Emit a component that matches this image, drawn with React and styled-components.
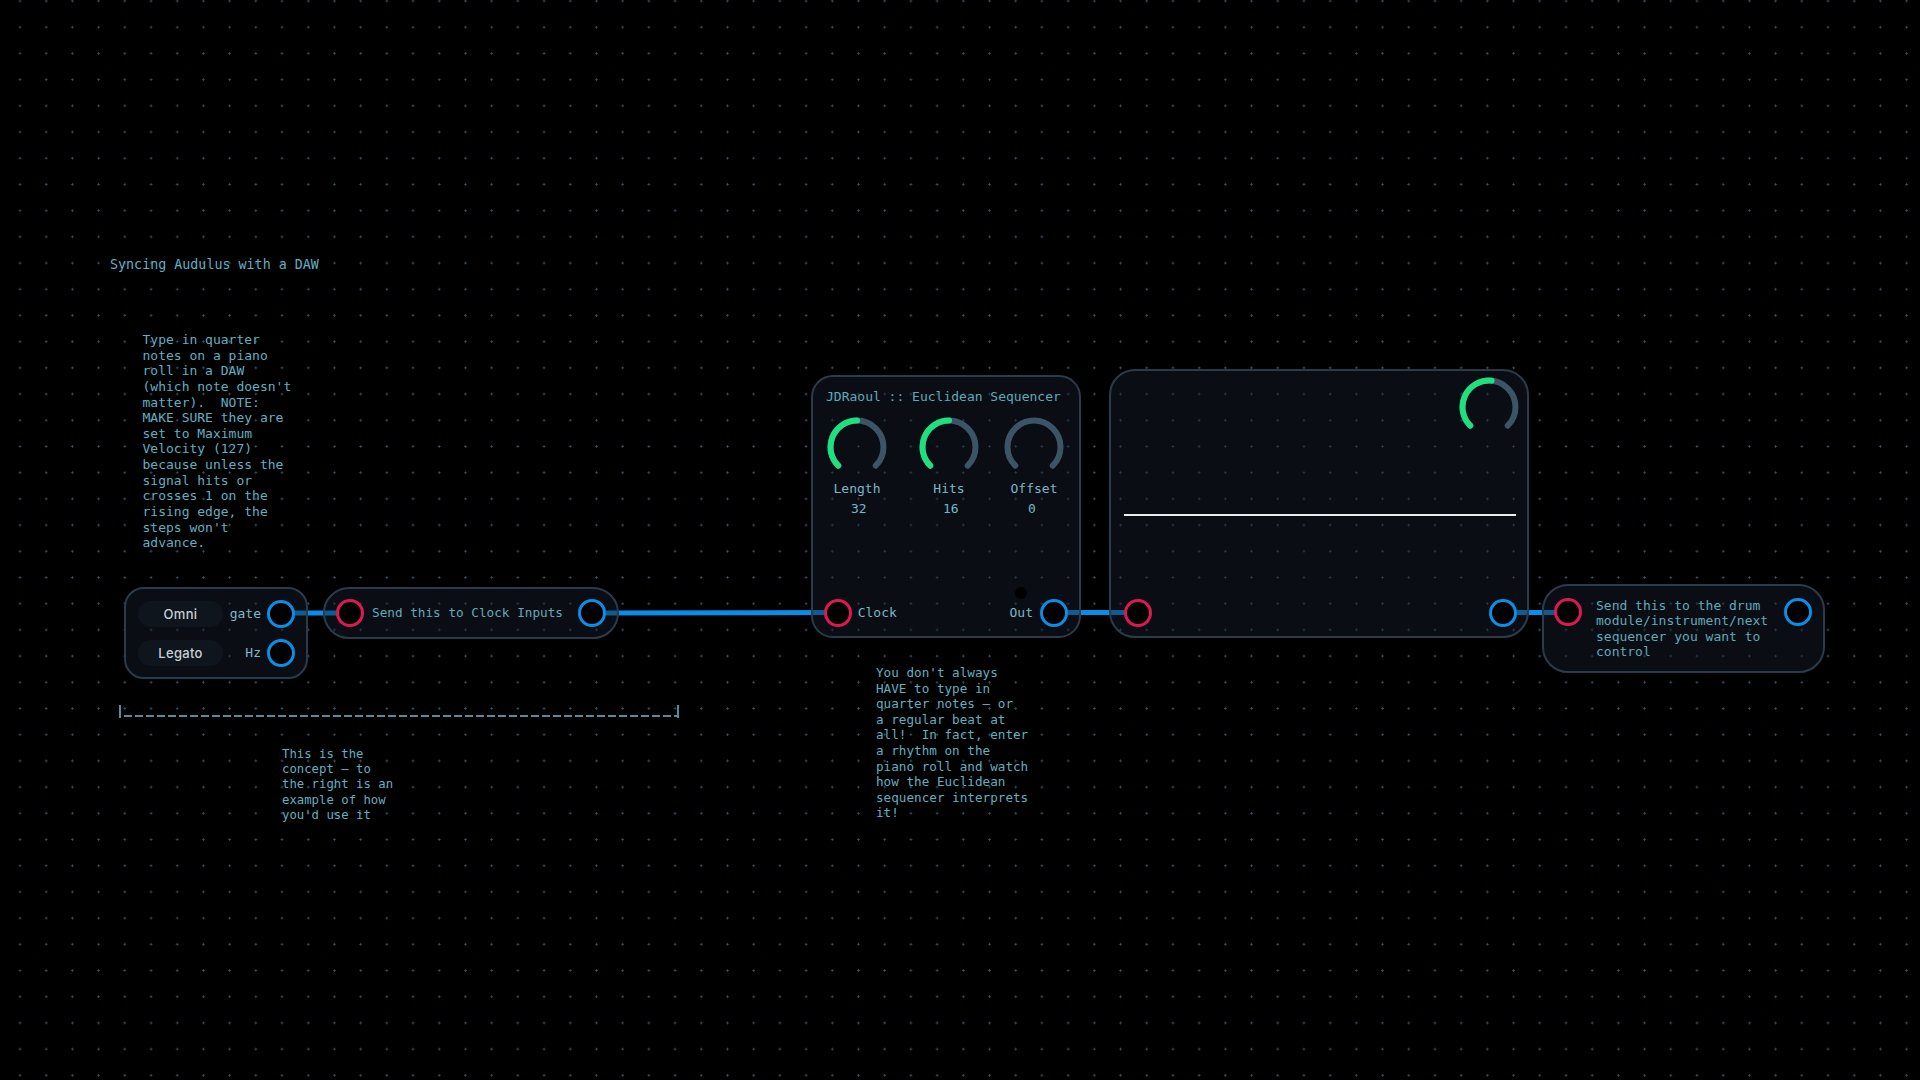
import React from "react";
import styled, { createGlobalStyle } from "styled-components";

const MONO = `"DejaVu Sans Mono", "Liberation Mono", monospace`;
const SANS = `Inter, "Noto Sans", "Liberation Sans", sans-serif`;

const GlobalStyle = createGlobalStyle`
  html, body { margin: 0; padding: 0; background: #000; }
  body { font-family: ${MONO}; overflow: hidden; }
  #root { width: 1920px; height: 1080px; }
`;

const Canvas = styled.div`
  position: relative;
  width: 1920px;
  height: 1080px;
  overflow: hidden;
  background-color: #000;
  background-image: radial-gradient(circle at center, rgba(58, 96, 122, 0.85) 0, rgba(58, 96, 122, 0.85) 0.9px, transparent 1.3px);
  background-size: 26.21px 26.21px;
  background-position: 6.9px -12.1px;
  font-family: ${MONO};
`;

const WireLayer = styled.svg`
  position: absolute;
  left: 0;
  top: 0;
  width: 1920px;
  height: 1080px;
  pointer-events: none;
`;

const Note = styled.div`
  position: absolute;
  left: ${(p) => p.$x}px;
  top: ${(p) => p.$y}px;
  white-space: pre;
  font-family: ${MONO};
  font-size: ${(p) => p.$fs || 13}px;
  line-height: ${(p) => p.$lh || 15.6}px;
  color: #62afc0;
`;

const Bracket = styled.div`
  position: absolute;
  left: ${(p) => p.$x}px;
  top: ${(p) => p.$y}px;
  width: ${(p) => p.$w}px;
  height: 13px;
  box-sizing: border-box;
  border-left: 2px solid #4f8f9c;
  border-right: 2px solid #4f8f9c;
  background-image: repeating-linear-gradient(to right, #4f8f9c 0, #4f8f9c 7.6px, transparent 7.6px, transparent 11px);
  background-size: 100% 2px;
  background-repeat: no-repeat;
  background-position: 3px calc(100% - 1px);
`;

const Node = styled.div`
  position: absolute;
  left: ${(p) => p.$x}px;
  top: ${(p) => p.$y}px;
  width: ${(p) => p.$w}px;
  height: ${(p) => p.$h}px;
  box-sizing: border-box;
  border: 2px solid #2a3b4a;
  border-radius: ${(p) => p.$r}px;
  background: rgba(22, 31, 44, 0.45);
  display: flex;
`;

const InputsNode = styled(Node)`
  flex-direction: column;
  padding: 10.5px 11px 0 12px;
  gap: 11.5px;
`;

const InputRow = styled.div`
  display: flex;
  align-items: center;
`;

const Pill = styled.div`
  flex: none;
  width: 85px;
  height: 26px;
  border-radius: 13px;
  background: #0f151c;
  display: flex;
  align-items: center;
  justify-content: center;
  font-family: ${SANS};
  font-size: 13px;
  font-weight: 500;
  letter-spacing: 0.3px;
  color: #c8d0d6;
`;

const PortLabel = styled.span`
  flex: ${(p) => (p.$grow ? 1 : "none")};
  text-align: ${(p) => (p.$right ? "right" : "left")};
  margin: 0 ${(p) => p.$mr || 0}px 0 ${(p) => p.$ml || 0}px;
  font-family: ${MONO};
  font-size: 13px;
  line-height: 16px;
  color: #7db6c6;
`;

const Port = styled.span`
  flex: none;
  width: 28px;
  height: 28px;
  box-sizing: border-box;
  border-radius: 50%;
  border: 3px solid ${(p) => (p.$kind === "in" ? "#dc1953" : "#0d8de6")};
  background: #000;
`;

const CommentNode = styled(Node)`
  align-items: center;
  padding: 0 11.5px 0 10.5px;
`;

const CommentText = styled.span`
  flex: 1;
  margin-left: 8.5px;
  font-size: 12.7px;
  line-height: 16px;
  color: #62a9b8;
  white-space: pre;
`;

const SeqNode = styled(Node)`
  flex-direction: column;
  padding: 12px 11px 8.7px 9px;
`;

const NodeTitle = styled.div`
  padding-left: 4px;
  font-size: 13px;
  line-height: 16px;
  color: #62a9b8;
  white-space: pre;
`;

const KnobRow = styled.div`
  display: flex;
  margin-top: 12px;
`;

const KnobCol = styled.div`
  flex: none;
  width: 70px;
  margin-left: ${(p) => p.$ml || 0}px;
  display: flex;
  flex-direction: column;
  align-items: center;
`;

const KnobSvg = styled.svg`
  display: block;
  width: 60px;
  height: 60px;
  flex: none;
`;

const KnobLabel = styled.div`
  margin-top: 4px;
  font-size: 13px;
  line-height: 16px;
  color: #7db6c6;
`;

const KnobValue = styled.div`
  width: 12px;
  margin-top: 3.5px;
  font-size: 13px;
  line-height: 16px;
  color: #6cbccc;
  white-space: nowrap;
  text-align: left;
`;

const Spacer = styled.div`
  flex: 1;
`;

const PortRow = styled.div`
  display: flex;
  align-items: center;
  padding-right: ${(p) => p.$pr || 0}px;
  padding-left: ${(p) => p.$pl || 0}px;
`;

const Led = styled.span`
  position: absolute;
  left: 202px;
  top: 209.7px;
  width: 12px;
  height: 12px;
  border-radius: 50%;
  background: #000;
`;

const ScopeNode = styled(Node)`
  flex-direction: column;
  padding: 5.7px 8px 8.7px 11px;
`;

const ScopeHeader = styled.div`
  display: flex;
  justify-content: flex-end;
`;

const Trace = styled.div`
  height: 2px;
  margin: 77.3px 3px 0 2px;
  background: #e9edf0;
`;

const OutNode = styled(Node)`
  align-items: flex-start;
  padding: 11.7px 11.3px 0 10.3px;
`;

const OutText = styled.div`
  flex: 1;
  margin: 0.3px 0 0 13.7px;
  font-size: 13px;
  line-height: 15.3px;
  color: #62a9b8;
  white-space: pre;
`;

function Knob({ value }) {
  const c = 30;
  const r = 26.5;
  const pt = (a) => [c + r * Math.cos((a * Math.PI) / 180), c + r * Math.sin((a * Math.PI) / 180)];
  const [sx, sy] = pt(135);
  const [ex, ey] = pt(45);
  const sweep = 270 * value;
  const [vx, vy] = pt(135 + sweep);
  return (
    <KnobSvg viewBox="0 0 60 60">
      <path
        d={`M${sx} ${sy} A${r} ${r} 0 1 1 ${ex} ${ey}`}
        fill="none"
        stroke="#3b5466"
        strokeWidth="6"
        strokeLinecap="round"
      />
      {value > 0 && (
        <path
          d={`M${sx} ${sy} A${r} ${r} 0 ${sweep > 180 ? 1 : 0} 1 ${vx} ${vy}`}
          fill="none"
          stroke="#1fe07f"
          strokeWidth="6"
          strokeLinecap="round"
        />
      )}
    </KnobSvg>
  );
}

const wires = [
  [282, 613, 349, 613],
  [592, 613, 838, 612.5],
  [1054, 612.5, 1136, 612.5],
  [1503, 612.5, 1568, 612.5],
];

const para1 = `Type in quarter
notes on a piano
roll in a DAW
(which note doesn't
matter).  NOTE:
MAKE SURE they are
set to Maximum
Velocity (127)
because unless the
signal hits or
crosses 1 on the
rising edge, the
steps won't
advance.`;

const para2 = `This is the
concept – to
the right is an
example of how
you'd use it`;

const para3 = `You don't always
HAVE to type in
quarter notes – or
a regular beat at
all!  In fact, enter
a rhythm on the
piano roll and watch
how the Euclidean
sequencer interprets
it!`;

const outText = `Send this to the drum
module/instrument/next
sequencer you want to
control`;

export default function App() {
  return (
    <>
      <GlobalStyle />
      <Canvas>
        <WireLayer viewBox="0 0 1920 1080">
          {wires.map(([x1, y1, x2, y2], i) => (
            <line key={i} x1={x1} y1={y1} x2={x2} y2={y2} stroke="#0b8ce6" strokeWidth="5" />
          ))}
        </WireLayer>

        <Note $x={110} $y={257} $fs={13.35}>Syncing Audulus with a DAW</Note>
        <Note $x={142.5} $y={332} $lh={15.64}>{para1}</Note>
        <Note $x={282} $y={746.5} $lh={15.4} $fs={12.3}>{para2}</Note>
        <Note $x={876} $y={665} $lh={15.6} $fs={12.65}>{para3}</Note>

        <Bracket $x={119} $y={705} $w={560} />

        <InputsNode $x={124} $y={587} $w={184} $h={92} $r={20}>
          <InputRow>
            <Pill>Omni</Pill>
            <PortLabel $grow $right $mr={6}>gate</PortLabel>
            <Port $kind="out" />
          </InputRow>
          <InputRow>
            <Pill>Legato</Pill>
            <PortLabel $grow $right $mr={6}>Hz</PortLabel>
            <Port $kind="out" />
          </InputRow>
        </InputsNode>

        <CommentNode $x={323} $y={587} $w={296} $h={52} $r={26}>
          <Port $kind="in" />
          <CommentText>Send this to Clock Inputs</CommentText>
          <Port $kind="out" />
        </CommentNode>

        <SeqNode $x={811} $y={375} $w={270} $h={263} $r={22}>
          <NodeTitle>JDRaoul :: Euclidean Sequencer</NodeTitle>
          <KnobRow>
            <KnobCol>
              <Knob value={0.5} />
              <KnobLabel>Length</KnobLabel>
              <KnobValue>32</KnobValue>
            </KnobCol>
            <KnobCol $ml={22}>
              <Knob value={0.5} />
              <KnobLabel>Hits</KnobLabel>
              <KnobValue>16</KnobValue>
            </KnobCol>
            <KnobCol $ml={15}>
              <Knob value={0} />
              <KnobLabel>Offset</KnobLabel>
              <KnobValue>0</KnobValue>
            </KnobCol>
          </KnobRow>
          <Spacer />
          <PortRow $pl={1.7}>
            <Port $kind="in" />
            <PortLabel $ml={6}>Clock</PortLabel>
            <Spacer />
            <PortLabel $mr={7}>Out</PortLabel>
            <Port $kind="out" />
          </PortRow>
          <Led />
        </SeqNode>

        <ScopeNode $x={1109} $y={369} $w={420} $h={269} $r={26}>
          <ScopeHeader>
            <Knob value={0.52} />
          </ScopeHeader>
          <Trace />
          <Spacer />
          <PortRow $pl={2} $pr={2.3}>
            <Port $kind="in" />
            <Spacer />
            <Port $kind="out" />
          </PortRow>
        </ScopeNode>

        <OutNode $x={1542} $y={584} $w={283} $h={89} $r={26}>
          <Port $kind="in" />
          <OutText>{outText}</OutText>
          <Port $kind="out" />
        </OutNode>
      </Canvas>
    </>
  );
}
